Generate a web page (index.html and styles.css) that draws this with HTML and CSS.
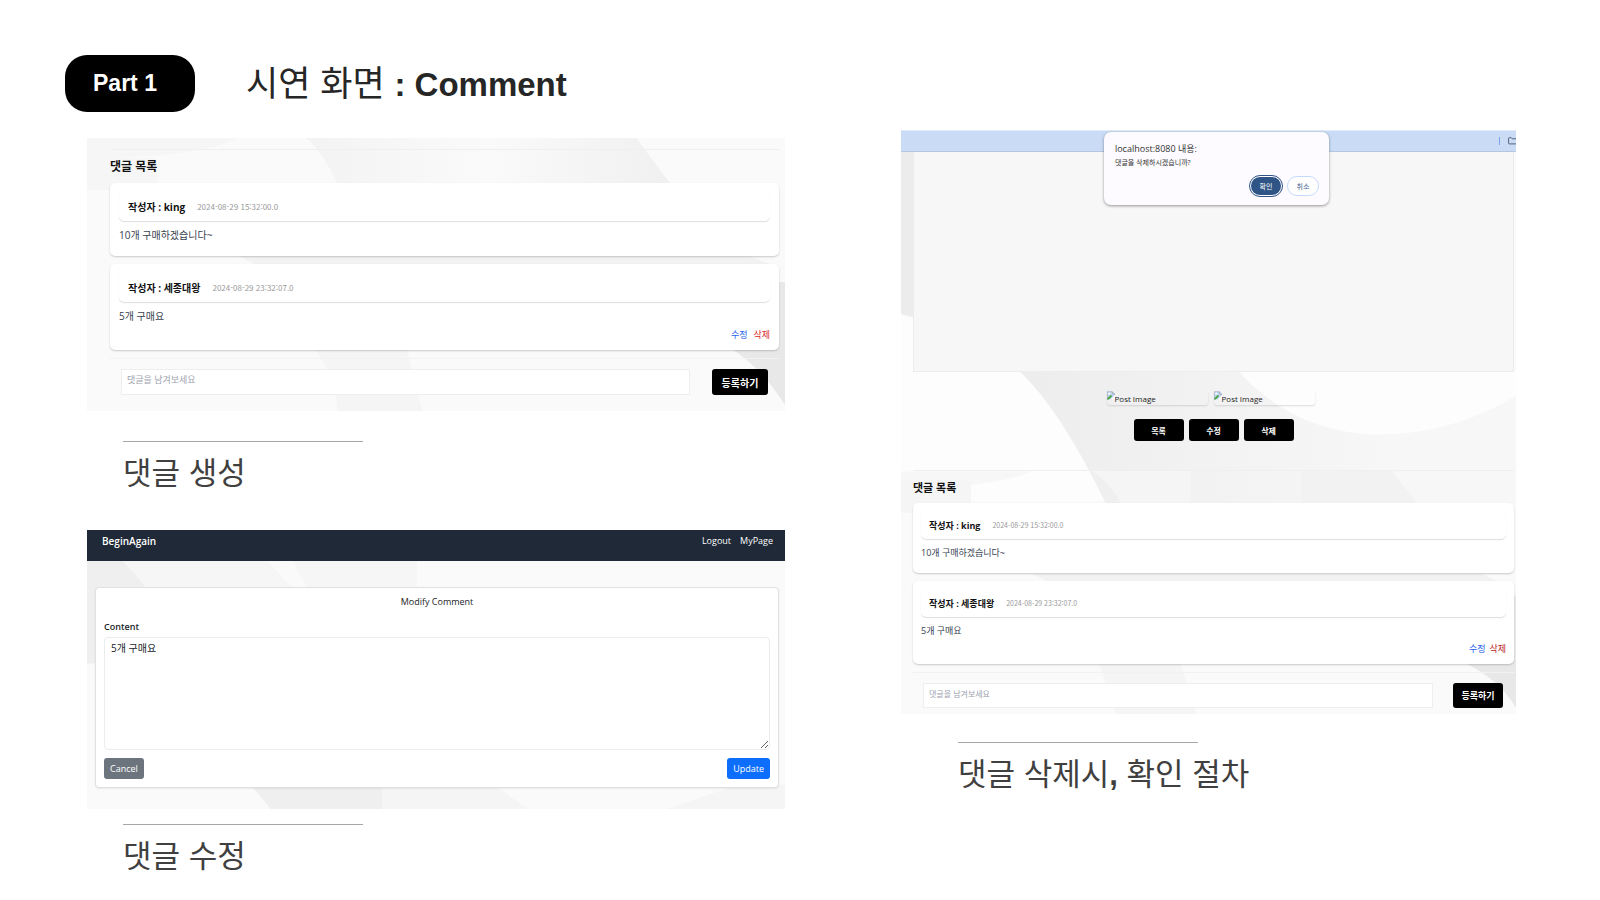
FILE: index.html
```html
<!DOCTYPE html>
<html lang="ko">
<head>
<meta charset="utf-8">
<title>시연 화면 : Comment</title>
<link rel="stylesheet" href="styles.css">
</head>
<body>
<header class="slide-header">
  <span class="part">Part 1</span>
  <h1 class="title">시연 화면 <b>: Comment</b></h1>
</header>
<main class="slide">
  <div class="column column-left">
    <figure class="shot">
      <div class="panel board">
        <svg class="backdrop" viewBox="0 0 698 273" preserveAspectRatio="none" aria-hidden="true">
          <defs>
            <linearGradient id="fadeA" x1="0" x2="1"><stop offset="0" stop-color="#fafafa"/><stop offset="1" stop-color="#f0f0f0"/></linearGradient>
            <linearGradient id="fadeB" x1="0" x2="1"><stop offset="0" stop-color="#f3f3f3"/><stop offset="1" stop-color="#fafafa"/></linearGradient>
          </defs>
          <path fill="#f6f6f6" d="M0 0H150Q110 20 0 20zM0 20H70V52H0z"/>
          <path fill="url(#fadeB)" d="M219 0H400V45H250Q236 14 219 0z"/>
          <path fill="url(#fadeA)" d="M400 0H549L583 45H400z"/>
          <path fill="#f2f2f2" d="M150 117H660L685 127H170z"/>
          <path fill="#f5f5f5" d="M228 212H320L335 273H250Q250 240 228 212z"/>
          <path fill="#e8e8e8" d="M690 144H698V267Q675 230 642 209H690z"/>
        </svg>
        <section class="comments">
          <h2 class="comments-title">댓글 목록</h2>
          <article class="comment">
            <header class="comment-head"><b>작성자 : king</b><time>2024-08-29 15:32:00.0</time></header>
            <p class="comment-text">10개 구매하겠습니다~</p>
          </article>
          <article class="comment">
            <header class="comment-head"><b>작성자 : 세종대왕</b><time>2024-08-29 23:32:07.0</time></header>
            <p class="comment-text">5개 구매요</p>
            <nav class="comment-actions"><a class="edit" href="#">수정</a><a class="remove" href="#">삭제</a></nav>
          </article>
          <form class="comment-form">
            <input type="text" aria-label="댓글" placeholder="댓글을 남겨보세요">
            <button type="button">등록하기</button>
          </form>
        </section>
      </div>
      <figcaption class="caption">댓글 생성</figcaption>
    </figure>

    <figure class="shot">
      <div class="panel editor">
        <svg class="backdrop" viewBox="0 0 698 278" preserveAspectRatio="none" aria-hidden="true">
          <path fill="#efefef" d="M0 31H36Q48 44 60 58L20 133H0z"/>
          <path fill="#f6f6f6" d="M36 31H180L206 58H60zM206 31H330V58H220z"/>
          <path fill="#efefef" d="M160 250H295V278H184z"/>
          <path fill="#f5f5f5" d="M295 250H400Q420 262 440 278H295zM580 278L650 254H698V278z"/>
        </svg>
        <nav class="topbar">
          <a class="brand" href="#">BeginAgain</a>
          <a href="#">Logout</a>
          <a href="#">MyPage</a>
        </nav>
        <form class="edit-card">
          <h2 class="edit-title">Modify Comment</h2>
          <label for="content">Content</label>
          <textarea id="content">5개 구매요</textarea>
          <div class="edit-buttons">
            <button class="cancel" type="button">Cancel</button>
            <button class="update" type="button">Update</button>
          </div>
        </form>
      </div>
      <figcaption class="caption">댓글 수정</figcaption>
    </figure>
  </div>

  <div class="column column-right">
    <figure class="shot">
      <div class="panel post">
        <svg class="backdrop" viewBox="0 0 615 583" preserveAspectRatio="none" aria-hidden="true">
          <defs>
            <linearGradient id="fadeC" x1="0" x2="1"><stop offset="0" stop-color="#ededed"/><stop offset="1" stop-color="#f8f8f8"/></linearGradient>
          </defs>
          <path fill="#ececec" d="M0 22H13V187L0 184z"/>
          <path fill="#fdfdfd" d="M0 184L118 240Q160 280 205 370H0z"/>
          <path fill="url(#fadeC)" d="M118 240H337Q380 280 430 298L480 305L530 373H205Q160 280 118 240z"/>
          <path fill="#f7f7f7" d="M471 304Q550 305 615 265V373H515zM0 341H130Q100 355 0 360z"/>
          <path fill="#fdfdfd" d="M337 240H615V265Q550 305 471 304Q390 300 337 240z"/>
          <path fill="#f5f5f5" d="M0 350H70V382H0zM190 340H290V373H220Q208 350 190 340z"/>
          <path fill="#f2f2f2" d="M400 340H490L517 373H400zM130 443H580L600 452H150z"/>
          <path fill="#f5f5f5" d="M198 533H280L295 583H215z"/>
          <path fill="#e8e8e8" d="M608 465H615V577Q600 550 566 533H608z"/>
        </svg>
        <div class="browser-bar">
          <i class="bar-divider"></i>
          <svg class="folder" viewBox="0 0 8 8" aria-hidden="true"><path d="M8 6.9H1.2Q.6 6.9.6 6.3V1.2Q.6.7 1.2.7H3.3L4.3 1.8H8" fill="none" stroke="#56657b"/></svg>
        </div>
        <div class="dialog" role="dialog" aria-labelledby="dialog-title">
          <h2 id="dialog-title">localhost:8080 내용:</h2>
          <p>댓글을 삭제하시겠습니까?</p>
          <div class="dialog-buttons">
            <button class="ok" type="button">확인</button>
            <button class="no" type="button">취소</button>
          </div>
        </div>
        <div class="post-body"></div>
        <div class="thumbs">
          <div class="thumb"><svg viewBox="0 0 9 9" aria-hidden="true"><path fill="#c4d5f5" d="M0 0H6L9 3V5L5 9H0z"/><path fill="#fff" d="M1 2Q3 0 4 2V3H1z"/><path fill="#48a63b" d="M0 8L4 4L6 5L2 9H0z"/><path fill="#fff" d="M9 4L4 9H9z"/><path fill="none" stroke="#929aa8" stroke-width=".6" d="M.3 9V.3H6L8.7 3V4M6 .3V3H8.7"/></svg><span>Post Image</span></div>
          <div class="thumb"><svg viewBox="0 0 9 9" aria-hidden="true"><path fill="#c4d5f5" d="M0 0H6L9 3V5L5 9H0z"/><path fill="#fff" d="M1 2Q3 0 4 2V3H1z"/><path fill="#48a63b" d="M0 8L4 4L6 5L2 9H0z"/><path fill="#fff" d="M9 4L4 9H9z"/><path fill="none" stroke="#929aa8" stroke-width=".6" d="M.3 9V.3H6L8.7 3V4M6 .3V3H8.7"/></svg><span>Post Image</span></div>
        </div>
        <div class="post-buttons">
          <button type="button">목록</button>
          <button type="button">수정</button>
          <button type="button">삭제</button>
        </div>
        <section class="comments">
          <h2 class="comments-title">댓글 목록</h2>
          <article class="comment">
            <header class="comment-head"><b>작성자 : king</b><time>2024-08-29 15:32:00.0</time></header>
            <p class="comment-text">10개 구매하겠습니다~</p>
          </article>
          <article class="comment">
            <header class="comment-head"><b>작성자 : 세종대왕</b><time>2024-08-29 23:32:07.0</time></header>
            <p class="comment-text">5개 구매요</p>
            <nav class="comment-actions"><a class="edit" href="#">수정</a><a class="remove" href="#">삭제</a></nav>
          </article>
          <form class="comment-form">
            <input type="text" aria-label="댓글" placeholder="댓글을 남겨보세요">
            <button type="button">등록하기</button>
          </form>
        </section>
      </div>
      <figcaption class="caption">댓글 삭제시<b>,</b> 확인 절차</figcaption>
    </figure>
  </div>
</main>
</body>
</html>
```

FILE: styles.css
```css
* {
  box-sizing: border-box;
}

body {
  margin: 0;
  background: #fff;
  color: #222;
  font-family: "Open Sans", "Noto Sans CJK KR", sans-serif;
}

h1, h2, p, figure {
  margin: 0;
}

a {
  color: inherit;
  text-decoration: none;
}

button, input, textarea {
  font-family: inherit;
}

button {
  border: 0;
  padding: 0;
}

/* Slide heading */
.slide-header {
  display: flex;
  align-items: flex-start;
  gap: 51px;
  padding: 55px 65px 0;
}

.part {
  width: 130px;
  padding: 0 28px;
  border-radius: 22px;
  background: #000;
  color: #fff;
  font: bold 23px/57px "Liberation Sans", sans-serif;
  white-space: nowrap;
}

.title {
  color: #262626;
  font: 400 35px/52px "Noto Sans CJK KR", sans-serif;
}

.title b {
  font: bold 33px/1 "Liberation Sans", sans-serif;
}

.slide {
  display: grid;
  grid-template-columns: 698fr 615fr;
  column-gap: 116px;
  align-items: start;
  padding: 0 84px 0 87px;
}

.column {
  display: flex;
  flex-direction: column;
}

.column-left {
  gap: 39px;
  padding-top: 26px;
}

.column-right {
  padding-top: 18px;
}

.panel {
  position: relative;
  z-index: 0;
  overflow: hidden;
  background: #fafafa;
}

.backdrop {
  position: absolute;
  inset: 0;
  z-index: -1;
  width: 100%;
  height: 100%;
}

.caption {
  margin: 30px 0 0 36px;
  color: #404040;
  font: 400 31px/40px "Noto Sans CJK KR", sans-serif;
}

.caption::before {
  content: "";
  display: block;
  width: 240px;
  height: 1px;
  margin-bottom: 9px;
  background: #a6a6a6;
}

.caption b {
  font-family: "Liberation Sans", sans-serif;
  line-height: 1;
}

.editor + .caption {
  margin-top: 15px;
}

.post + .caption {
  margin: 28px 0 0 57px;
}

/* Comment list */
.board {
  --head: 30px;
  --side: 9px;
  --text: 10px;
  --author: 10px;
  --date: 8px;
  --tail: 6px;
  --gap: 8px;
  padding: 11px 6px 16px 23px;
}

.comments {
  border-top: 1px solid #efefef;
}

.comments-title {
  padding: 7px 0 6px;
  color: #111;
  font-size: 12px;
  font-weight: bold;
  line-height: 20px;
}

.comment {
  margin-bottom: var(--gap);
  padding: 8px var(--side);
  border-radius: 5px;
  background: #fff;
  box-shadow: 0 1px 2px #0003;
}

.comment-head {
  display: flex;
  align-items: center;
  gap: 12px;
  height: var(--head);
  padding: 0 var(--side);
  border-radius: 5px;
  box-shadow: 0 1px 1px #0002;
  color: #111;
  font-size: var(--author);
}

.comment-head time {
  color: #999;
  font-family: "Noto Sans CJK KR", sans-serif;
  font-size: var(--date);
}

.comment-text {
  margin-top: 7px;
  color: #374151;
  font-size: var(--text);
  line-height: 14px;
}

.comment-text:last-child {
  margin-bottom: var(--tail);
}

.comment-actions {
  display: flex;
  justify-content: flex-end;
  gap: 6px;
  margin-top: 5px;
  font-size: 9px;
  line-height: 14px;
}

.edit {
  color: #2563eb;
}

.remove {
  color: #dc2626;
}

.comment-form {
  display: flex;
  gap: 22px;
  padding: 10px 11px 0;
  border-top: 1px solid #f2f2f2;
}

.comment-form input {
  flex: 1;
  min-width: 0;
  height: 26px;
  padding: 0 5px 5px;
  border: 1px solid #eee;
  background: #fff;
  font-size: 9px;
}

.comment-form input::placeholder {
  color: #9ca3af;
}

.comment-form button {
  width: 56px;
  border-radius: 3px;
  background: #000;
  color: #fff;
  font-size: 10px;
  font-weight: bold;
}

/* Comment editor */
.editor {
  padding-bottom: 21px;
}

.topbar {
  display: flex;
  gap: 9px;
  height: 31px;
  padding: 4px 12px 0 15px;
  background: #1f2937;
  color: #fff;
  font-size: 9px;
  line-height: 14px;
}

.brand {
  margin-right: auto;
  font-size: 10px;
  font-weight: 600;
}

.edit-card {
  display: flex;
  flex-direction: column;
  margin: 26px 6px 0 8px;
  padding: 7px 8px 8px;
  border: 1px solid #e0e0e0;
  border-radius: 4px;
  background: #fff;
  box-shadow: 0 1px 2px #0001;
  color: #212529;
  font-size: 9px;
  line-height: 14px;
}

.edit-title {
  font-size: 9px;
  font-weight: 400;
  text-align: center;
}

.edit-card label {
  margin: 11px 0 3px;
  font-weight: 600;
}

.edit-card textarea {
  height: 113px;
  padding: 3px 6px;
  border: 1px solid #ececec;
  border-radius: 4px;
  color: #212529;
  font-size: 10px;
  line-height: 14px;
}

.edit-buttons {
  display: flex;
  justify-content: space-between;
  margin-top: 8px;
}

.edit-buttons button {
  height: 21px;
  padding: 0 6px;
  border-radius: 3px;
  color: #fff;
  font-size: 9px;
}

.cancel {
  background: #6c757d;
}

.update {
  background: #0d6efd;
}

/* Post page with the confirm dialog */
.post {
  --head: 28px;
  --side: 8px;
  --text: 9px;
  --author: 9px;
  --date: 7px;
  --tail: 5px;
  --gap: 8px;
  padding: 0 2px 6px 12px;
}

.browser-bar {
  display: flex;
  justify-content: flex-end;
  align-items: center;
  gap: 8px;
  height: 22px;
  margin: 0 -2px 0 -12px;
  border-top: 1px solid #e3ecf9;
  border-bottom: 1px solid #b5c7e0;
  background: #c9dbf5;
}

.bar-divider {
  width: 1px;
  height: 8px;
  background: #7ba5e6;
}

.folder {
  width: 8px;
  height: 8px;
}

.dialog {
  position: absolute;
  top: 2px;
  left: 33%;
  width: 225px;
  padding: 10px 10px 9px 11px;
  border-radius: 7px;
  background: #fdfbff;
  box-shadow: 0 1px 3px #0006;
  color: #333;
}

.dialog h2 {
  font-size: 9px;
  font-weight: 400;
  line-height: 14px;
}

.dialog p {
  font-size: 7px;
  line-height: 14px;
}

.dialog-buttons {
  display: flex;
  justify-content: flex-end;
  gap: 5px;
  margin-top: 6px;
}

.dialog-buttons button {
  width: 32px;
  height: 20px;
  border-radius: 10px;
  font-size: 7px;
}

.ok {
  border: 1px solid #fff;
  outline: 1px solid #2f5587;
  background: #2f5587;
  color: #fff;
}

.no {
  border: 1px solid #c5dafa;
  background: #fff;
  color: #41618d;
}

.post-body {
  height: 220px;
  border: 1px solid #ececec;
  border-top: 0;
  background: #f7f7f7;
}

.thumbs {
  display: flex;
  justify-content: center;
  margin-top: 19px;
}

.thumb {
  display: flex;
  width: 101px;
  height: 14px;
  margin-right: 6px;
  border-radius: 3px;
  box-shadow: 0 1px 2px #0002;
  color: #222;
  font-size: 8px;
  line-height: 15px;
}

.thumb svg {
  width: 8px;
  height: 9px;
}

.post-buttons {
  display: flex;
  justify-content: center;
  gap: 5px;
  margin: 14px 0 29px;
}

.post-buttons button {
  width: 50px;
  height: 22px;
  border-radius: 3px;
  background: #000;
  color: #fff;
  font-size: 8px;
  font-weight: bold;
}

.post .comments-title {
  padding: 8px 0 6px;
  font-size: 11px;
  line-height: 18px;
}

.post .comment-actions {
  margin-top: 4px;
  gap: 4px;
}

.post .remove {
  color: #b91c1c;
}

.post .comment-form {
  gap: 20px;
  padding: 10px 11px 0 10px;
}

.post .comment-form input {
  height: 25px;
  font-size: 8px;
}

.post .comment-form button {
  width: 50px;
  font-size: 9px;
}
```
